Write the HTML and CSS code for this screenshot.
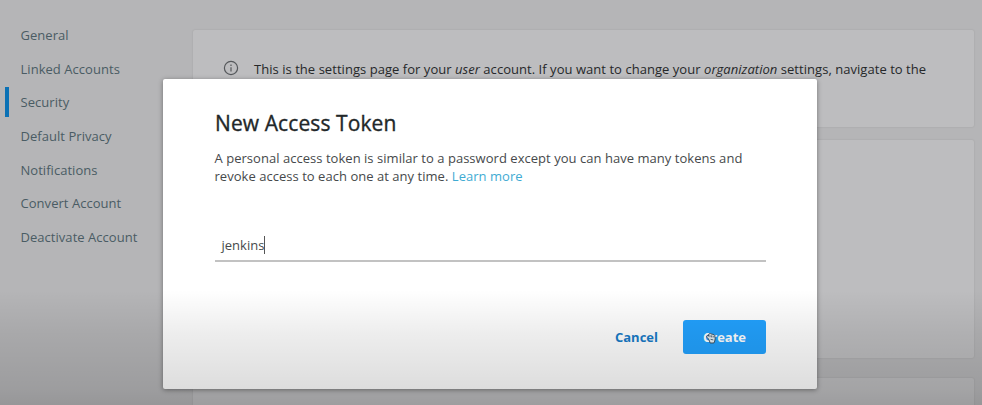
FILE: index.html
```html
<!DOCTYPE html>
<html lang="en">
<head>
<meta charset="utf-8">
<title>Account Settings</title>
<link rel="stylesheet" href="styles.css">
</head>
<body>
<div class="page">
  <nav class="sidebar">
    <a class="nav-item">General</a>
    <a class="nav-item">Linked Accounts</a>
    <a class="nav-item active">Security</a>
    <a class="nav-item">Default Privacy</a>
    <a class="nav-item">Notifications</a>
    <a class="nav-item">Convert Account</a>
    <a class="nav-item">Deactivate Account</a>
  </nav>
  <main class="content">
    <section class="card notice">
      <svg class="info" viewBox="0 0 16 16" fill="none" stroke="#55585b" stroke-width="1.2"><circle cx="8" cy="8" r="6.6"/><path d="M8 7.2v4.2M8 4.4v1.5"/></svg>
      <p class="notice-text">This is the settings page for your <em>user</em> account. If you want to change your <em>organization</em> settings, navigate to the</p>
    </section>
    <section class="card tokens"></section>
    <section class="card rest"></section>
  </main>
</div>
<div class="modal" role="dialog">
  <h1 class="title">New Access Token</h1>
  <p class="desc">A personal access token is similar to a password except you can have many tokens and<br>revoke access to each one at any time. <a class="link">Learn more</a></p>
  <div class="field"><span class="value">jenkins</span><span class="caret"></span></div>
  <div class="actions">
    <button class="cancel">Cancel</button>
    <button class="create">Create</button>
  </div>
</div>
<div class="shade"></div>
<svg class="pointer" viewBox="0 0 12 13"><path d="M3.4 6.8 2 5.4Q1.2 4.5 2.1 3.8 2.8 3.4 3.6 4.1V2.5Q3.8 1.5 4.8 1.8 5.7 1.3 6.3 2 7.2 1.7 7.8 2.5 9 2.2 9.7 3.4L10.2 6.8Q9.9 9.2 8.9 11H5.1Q4.8 9.3 3.4 6.8Z" fill="#d4dce0" stroke="#344b5b" stroke-width="1"/><path d="M5 3.2v2M6.6 3.4v2M8.2 3.8v1.7M5.5 7.3l2.8.6" fill="none" stroke="#344b5b" stroke-width=".8"/></svg>
</body>
</html>
```

FILE: styles.css
```css
* { box-sizing: border-box; }
body {
  margin: 0;
  height: 405px;
  overflow: hidden;
  background: #b5b5b7;
  font-family: "Open Sans", sans-serif;
  font-size: 13px;
  color: #26282a;
}
.page { display: flex; height: 405px; overflow: hidden; }
.sidebar { width: 193px; flex: none; padding: 20px 0 0 5px; }
.nav-item {
  display: flex;
  align-items: center;
  height: 30px;
  margin-bottom: 3.67px;
  padding-left: 12px;
  border-left: 4px solid transparent;
  padding-left: 11.5px;
  letter-spacing: .04px;
  color: #4a5c64;
}
.nav-item.active { border-left-color: #0b71b5; }
.content {
  width: 781px;
  flex: none;
  display: flex;
  flex-direction: column;
  gap: 13px;
  padding-top: 30px;
}
.card { flex: none; background: #bdbdbf; border-radius: 2px; box-shadow: 0 0 2px rgba(0, 0, 0, .13); }
.notice { display: flex; height: 97px; padding: 30px 0 0 30px; }
.info { width: 16px; height: 16px; flex: none; }
.notice-text { margin: 0 0 0 15px; line-height: 18px; letter-spacing: .042px; white-space: nowrap; }
.tokens { height: 218px; }
.rest { height: 60px; margin-top: 7px; }
.modal {
  position: absolute;
  left: 163px;
  top: 79px;
  width: 654px;
  height: 310px;
  padding: 29px 51px 0 52px;
  background: #fff;
  border-radius: 2px;
  box-shadow: 0 1px 5px rgba(0, 0, 0, .4);
}
.title {
  margin: 0;
  font-size: 21px;
  line-height: 30px;
  font-weight: 500;
  letter-spacing: .1px;
  color: #222729;
  -webkit-text-stroke: .35px #222729;
  white-space: nowrap;
}
.desc { margin: 11px 0 0 -.5px; line-height: 18px; letter-spacing: .035px; color: #46494b; white-space: nowrap; }
.link { color: #3fabd3; }
.field {
  display: flex;
  align-items: center;
  height: 32px;
  margin-top: 45px;
  padding-left: 6.5px;
  border-bottom: 2px solid #c2c2c2;
  color: #46494b;
}
.caret { width: 1px; height: 18px; background: #555; }
.actions { display: flex; justify-content: flex-end; gap: 25px; margin-top: 58px; }
.actions button { height: 34px; padding: 0; border: 0; font: bold 13px "Open Sans", sans-serif; }
.cancel { background: none; color: #187bc7; }
.create { width: 83px; border-radius: 3px; background: #22a2ff; color: #fff; }
.shade {
  position: absolute;
  inset: 290px 0 0;
  background: linear-gradient(rgba(0, 0, 0, 0), rgba(0, 0, 0, .07) 38%, rgba(0, 0, 0, .135) 86%, rgba(0, 0, 0, .17));
  pointer-events: none;
}
.pointer { position: absolute; left: 705px; top: 332px; width: 12px; height: 13px; }
```
